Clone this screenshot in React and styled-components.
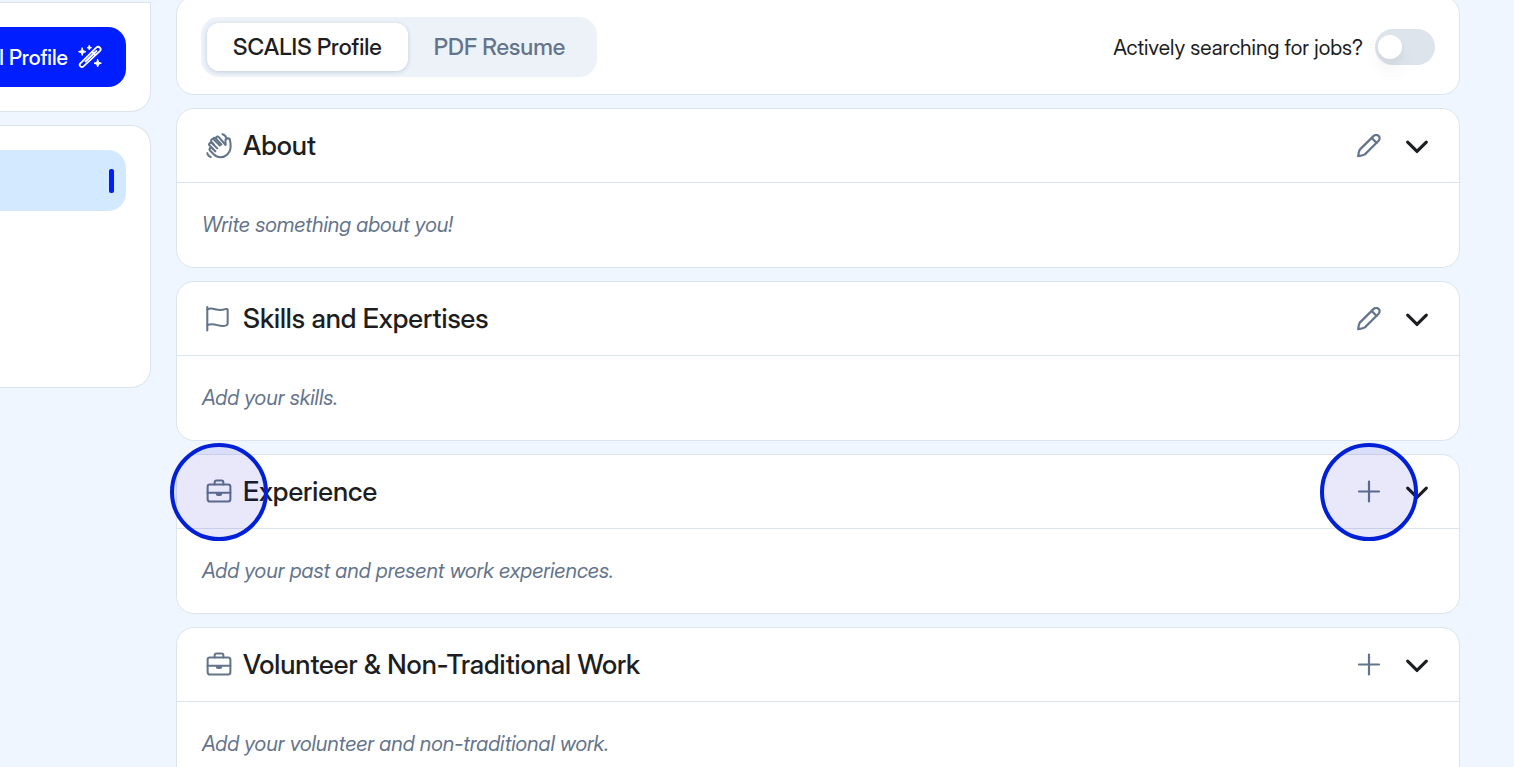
import { useState } from "react";
import styled, { createGlobalStyle } from "styled-components";

const line = "#dce4ee";
const ink = "#1d1e22";
const slate = "#64748b";
const blue = "#001eff";

const GlobalStyle = createGlobalStyle`
  * {
    box-sizing: border-box;
  }

  body {
    margin: 0;
    overflow: hidden;
    background: #eff6ff;
    color: ${ink};
    font-family: "Inter Display", Inter, "Liberation Sans", sans-serif;
  }

  button {
    font-family: inherit;
    border: none;
    cursor: pointer;
  }

  svg {
    flex-shrink: 0;
  }
`

const Page = styled.div`
  display: grid;
  grid-template-columns: 151px minmax(0, 1fr);
  column-gap: 25px;
  align-items: start;
  height: 100vh;
  padding-right: 54px;
  overflow: hidden;
`
const Sidebar = styled.aside`
  display: flex;
  flex-direction: column;
  gap: 13px;
`
const SideCard = styled.section`
  padding: 24px 24px 24px 0;
  background: #fff;
  border: 1px solid ${line};
  border-left: none;
  border-radius: 0 20px 20px 0;
`
const ProfileCard = styled(SideCard)`
  margin-top: 2px;
  border-top-right-radius: 0;
`
const NavCard = styled(SideCard)`
  min-height: 263px;
`
const ProfileButton = styled.button`
  display: flex;
  align-items: center;
  justify-content: flex-end;
  gap: 10px;
  width: 100%;
  height: 60px;
  padding: 0 24px 0 0;
  border-radius: 0 18px 18px 0;
  background: ${blue};
  color: #fff;
  font-size: 21px;
  font-weight: 500;
  white-space: nowrap;
`
const NavItem = styled.a`
  display: flex;
  align-items: center;
  justify-content: flex-end;
  height: 61px;
  padding-right: 12px;
  border-radius: 0 18px 18px 0;
  background: #d3e9ff;

  span {
    width: 5px;
    height: 24px;
    border-radius: 2px;
    background: ${blue};
  }
`
const Main = styled.main`
  display: flex;
  flex-direction: column;
  gap: 13px;
  margin-top: -4px;
`
const Card = styled.section`
  background: #fff;
  border: 1px solid ${line};
  border-radius: 18px;
`
const TopBar = styled(Card)`
  display: flex;
  align-items: center;
  justify-content: space-between;
  padding: 20px 24px 17px;
`
const TabList = styled.div`
  display: flex;
  padding: 6px;
  border-radius: 18px;
  background: #edf2f9;
`
const Tab = styled.button`
  height: 48px;
  padding: 0 26px;
  border-radius: 12px;
  background: ${({ $active }) => $active ? "#fff" : "transparent"};
  box-shadow: ${({ $active }) => $active ? "0 1px 4px rgba(30, 50, 90, 0.2)" : "none"};
  color: ${({ $active }) => $active ? ink : slate};
  font-size: 23px;
  font-weight: 500;
`
const SearchingLabel = styled.label`
  display: flex;
  align-items: center;
  gap: 12px;
  font-size: 21px;
`
const Switch = styled.input`
  appearance: none;
  width: 60px;
  height: 36px;
  margin: 0;
  padding: 6px 3px;
  border-radius: 18px;
  background: ${({ checked }) => checked ? blue : "#dee4ec"};
  cursor: pointer;

  &::before {
    content: "";
    display: block;
    width: 24px;
    height: 24px;
    margin-left: ${({ checked }) => checked ? "30px" : "0"};
    border-radius: 50%;
    background: #fff;
    box-shadow: 0 12px 18px rgba(0, 0, 0, 0.05), 0 4px 8px rgba(0, 0, 0, 0.03);
  }
`
const CardHeader = styled.header`
  display: flex;
  align-items: center;
  gap: 11px;
  height: 74px;
  padding: 0 28px 0 29px;
  border-bottom: 1px solid ${line};

  h2 {
    flex: 1;
    margin: 0;
    font-size: 27px;
    font-weight: 500;
    line-height: 36px;
  }
`
const IconSlot = styled.span`
  position: relative;
  display: flex;
  color: ${slate};
`
const Actions = styled.div`
  display: flex;
  align-items: center;
  gap: 22px;
`
const IconButton = styled.button`
  display: flex;
  padding: 0;
  background: none;
  color: ${({ $dark }) => $dark ? ink : slate};
`
const Ring = styled.span`
  position: absolute;
  top: 50%;
  left: 50%;
  z-index: 1;
  width: 98px;
  height: 98px;
  border: 4px solid #0020d8;
  border-radius: 50%;
  background: rgba(0, 0, 200, 0.09);
  transform: translate(-50%, -50%);
  pointer-events: none;
`
const Hint = styled.p`
  margin: 0;
  padding: 26px 25px;
  color: ${slate};
  font-size: 21px;
  font-style: italic;
  line-height: 32px;
`

const Icon = ({ size = 26, width = 1.9, children }) => (
  <svg width={size} height={size} viewBox="0 0 24 24" fill="none" stroke="currentColor"
    strokeWidth={width} strokeLinecap="round" strokeLinejoin="round" aria-hidden="true">
    {children}
  </svg>
)

const WaveIcon = () => (
  <Icon>
    <path d="M18 10.800V7.200a2.100 2.100 0 0 1 4.200-.3c.4 2 .7 4.200.5 6.600-.5 5-4.500 8.800-9.200 8.800-2.600 0-4.700-1-6.400-2.700l-3.600-3.600a1.500 1.500 0 0 1 2.100-2.100l3 3" />
    <path d="m10.400 14.200-4.800-4.800a1.500 1.500 0 0 0-2.200 2.200l2.700 2.800" />
    <path d="m12.800 11.600-5.500-5.500a1.500 1.500 0 0 0-2.200 2.200l2 2.300" />
    <path d="m18 10.800-6.200-7a1.500 1.500 0 0 0-2.300 0c-.5.600-.5 1.400.1 2l4.600 4.800" />
    <path d="M9.600 5.600C8.500 4.400 7.400 4.200 6.800 5" />
    <path d="M15.200 1.100c1.700.4 2.900 1.500 3.300 3.100" />
    <path d="M1.200 18.600c.4 1.900 1.500 3.100 3.200 3.600" />
  </Icon>
)

const FlagIcon = () => (
  <Icon>
    <path d="M1.200 1v21.500" />
    <path d="M1.200 3.200c5.500-3 8.500 2.500 16.500-.3 1.500-.5 2.300-.1 2.300 1v12.300c0 1-.4 1.400-1.300 1.700C12 20.400 8.500 14.600 1.200 17.600" />
  </Icon>
)

const BriefcaseIcon = () => (
  <Icon>
    <rect x="1.500" y="5" width="21" height="15.800" rx="2" />
    <path d="M8 5V2.900a1.500 1.500 0 0 1 1.500-1.500h5A1.500 1.500 0 0 1 16 2.900V5" />
    <path d="M1.500 12.700h21" />
    <path d="M10 13.200h4v.6a1 1 0 0 1-1 1h-2a1 1 0 0 1-1-1z" fill="currentColor" />
  </Icon>
)

const PencilIcon = () => (
  <Icon size={24} width={2.2}>
    <path d="M1.200 22.200c.2-2.500.7-4.800 1.600-6.600L16.700 1.900a3.400 3.400 0 0 1 4.900 0 3.400 3.400 0 0 1 0 4.900L7.900 20.400c-1.900 1.100-4.200 1.600-6.700 1.800z" />
    <path d="m14.700 4 4.900 4.900" />
  </Icon>
)

const PlusIcon = () => (
  <Icon size={24} width={2.2}>
    <path d="M12 1.500v20M2 11.500h20" />
  </Icon>
)

const ChevronIcon = () => (
  <Icon size={28} width={2.7}>
    <path d="m4 8.700 8 8 8-8" />
  </Icon>
)

const WandIcon = () => (
  <Icon size={24} width={1.8}>
    <path d="M18.200 2.600 2.400 18.300a2.200 2.200 0 0 0 0 3.100 2.200 2.200 0 0 0 3.100 0L21.800 6.100a2.300 2.300 0 0 0 .3-3.200 2.800 2.800 0 0 0-3.900-.3z" />
    <path d="M7.500 16.500 18.500 6M14 6.800l3.200 3.200" />
    <g fill="currentColor" strokeWidth="1">
      <path d="M4.200 3l1 2.700L7.900 6.700l-2.700 1L4.200 10.400l-1-2.700L.5 6.700l2.700-1z" />
      <path d="M11.300.5l.6 1.600 1.600.6-1.600.6-.6 1.700-.6-1.700-1.600-.6 1.600-.6z" />
      <path d="M19.700 14.500l1 2.700 2.700 1-2.700 1-1 2.700-1-2.700-2.700-1 2.700-1z" />
    </g>
  </Icon>
)

const sections = [
  { title: "About", hint: "Write something about you!", icon: WaveIcon, action: "Edit" },
  { title: "Skills and Expertises", hint: "Add your skills.", icon: FlagIcon, action: "Edit" },
  { title: "Experience", hint: "Add your past and present work experiences.", icon: BriefcaseIcon, action: "Add", ringed: true },
  { title: "Volunteer & Non-Traditional Work", hint: "Add your volunteer and non-traditional work.", icon: BriefcaseIcon, action: "Add" },
]

function ProfileSection({ title, hint, icon: SectionIcon, action, ringed }) {
  const [open, setOpen] = useState(true);

  return (
    <Card>
      <CardHeader>
        <IconSlot>
          <SectionIcon />
          {ringed && <Ring />}
        </IconSlot>
        <h2>{title}</h2>
        <Actions>
          <IconSlot>
            <IconButton aria-label={`${action} ${title}`}>
              {action === "Edit" ? <PencilIcon /> : <PlusIcon />}
            </IconButton>
            {ringed && <Ring />}
          </IconSlot>
          <IconButton $dark aria-label={`Toggle ${title}`} aria-expanded={open} onClick={() => setOpen(!open)}>
            <ChevronIcon />
          </IconButton>
        </Actions>
      </CardHeader>
      {open && <Hint>{hint}</Hint>}
    </Card>
  )
}

function ProfileTopBar() {
  const [tab, setTab] = useState("SCALIS Profile");
  const [searching, setSearching] = useState(false);

  return (
    <TopBar>
      <TabList role="tablist">
        {["SCALIS Profile", "PDF Resume"].map((name) => (
          <Tab key={name} role="tab" aria-selected={tab === name} $active={tab === name} onClick={() => setTab(name)}>
            {name}
          </Tab>
        ))}
      </TabList>
      <SearchingLabel htmlFor="searching">
        Actively searching for jobs?
        <Switch id="searching" type="checkbox" checked={searching} onChange={(e) => setSearching(e.target.checked)} />
      </SearchingLabel>
    </TopBar>
  )
}

const App = () => (
  <>
    <GlobalStyle />
    <Page>
      <Sidebar>
        <ProfileCard>
          <ProfileButton>l Profile <WandIcon /></ProfileButton>
        </ProfileCard>
        <NavCard as="nav">
          <NavItem href="#profile" aria-label="Profile"><span /></NavItem>
        </NavCard>
      </Sidebar>
      <Main>
        <ProfileTopBar />
        {sections.map((section) => <ProfileSection key={section.title} {...section} />)}
      </Main>
    </Page>
  </>
)

export default App;
